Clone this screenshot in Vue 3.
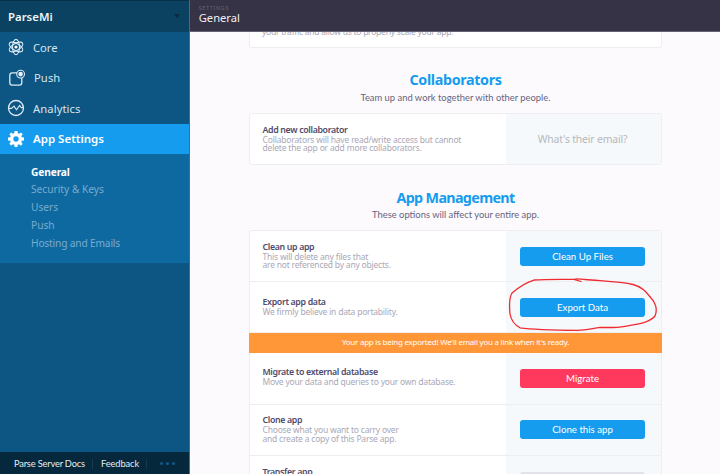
<script setup>
const nav = [
  { icon: 'core', label: 'Core', cls: 'core' },
  { icon: 'push', label: 'Push', cls: 'push' },
  { icon: 'analytics', label: 'Analytics', cls: 'analytics' },
  { icon: 'gear', label: 'App Settings', cls: 'active' },
]
const sub = ['General', 'Security & Keys', 'Users', 'Push', 'Hosting and Emails']
const rowsTop = [
  { title: 'Clean up app', lines: ['This will delete any files that', 'are not referenced by any objects.'], button: 'Clean Up Files', kind: 'blue' },
  { title: 'Export app data', lines: ['We firmly believe in data portability.'], button: 'Export Data', kind: 'blue', circled: true },
]
const rowsBottom = [
  { title: 'Migrate to external database', lines: ['Move your data and queries to your own database.'], button: 'Migrate', kind: 'red' },
  { title: 'Clone app', lines: ['Choose what you want to carry over', 'and create a copy of this Parse app.'], button: 'Clone this app', kind: 'blue' },
  { title: 'Transfer app', lines: [], button: '', kind: 'gray' },
]
</script>

<template>
  <div class="page">
    <aside class="sidebar">
      <div class="app-name"><span>ParseMi</span><svg width="6" height="5" viewBox="0 0 6 5"><path d="M0 0H6L3 4.6Z" fill="#092c40" /></svg></div>
      <nav>
        <div v-for="n in nav" :key="n.label" class="nav-item" :class="n.cls">
          <svg class="icon" width="18" height="18" viewBox="0 0 18 18" fill="none" stroke="#dcebf5" stroke-width="1.1">
            <g v-if="n.icon === 'core'">
              <ellipse cx="9" cy="9" rx="3.5" ry="7.6" />
              <ellipse cx="9" cy="9" rx="3.5" ry="7.6" transform="rotate(60 9 9)" />
              <ellipse cx="9" cy="9" rx="3.5" ry="7.6" transform="rotate(120 9 9)" />
              <circle cx="9" cy="9" r="1.6" fill="#fff" stroke="none" />
            </g>
            <g v-else-if="n.icon === 'push'">
              <path d="M10 3.8H5.2Q2.8 3.8 2.8 6.2V13.8Q2.8 16.2 5.2 16.2H12.4Q14.8 16.2 14.8 13.8V9" stroke-width="1.3" />
              <circle cx="13.6" cy="5.1" r="3.9" />
              <circle cx="13.6" cy="5.1" r="2.3" fill="#e9f4fb" stroke="none" />
            </g>
            <g v-else-if="n.icon === 'analytics'">
              <circle cx="9" cy="9" r="7.5" stroke-width="1.3" />
              <path d="M1.8 9.4H4.6L7 7.2L9.5 10.8L12.6 6.5L14.3 8.6H16.3" />
            </g>
            <g v-else fill="#fff" stroke="none">
              <path fill-rule="evenodd" d="M7.5 1H10.5L10.9 3.3L12.2 3.8L14.1 2.5L15.7 4.2L14.3 6.1L14.8 7.3L17 7.6V10.4L14.8 10.8L14.3 12L15.6 13.9L13.8 15.7L12 14.3L10.8 14.8L10.4 17H7.6L7.2 14.8L6 14.3L4.1 15.6L2.4 13.8L3.7 12L3.2 10.8L1 10.4V7.6L3.2 7.2L3.7 6L2.4 4.2L4.2 2.4L6 3.7L7.2 3.2ZM9 6.3A2.7 2.7 0 1 0 9 11.7A2.7 2.7 0 1 0 9 6.3Z" />
            </g>
          </svg>
          <span>{{ n.label }}</span>
        </div>
      </nav>
      <div class="submenu">
        <div v-for="(s, i) in sub" :key="s" class="sub-item" :class="['s' + i, { current: i === 0 }]"><span>{{ s }}</span></div>
      </div>
      <footer class="foot">
        <span class="docs">Parse Server Docs</span>
        <span class="feedback">Feedback</span>
        <span class="dots"><i></i><i></i><i></i></span>
      </footer>
    </aside>

    <main class="main">
      <header class="topbar">
        <small>SETTINGS</small>
        <span>General</span>
      </header>
      <div class="content">
        <section class="card cut"><p class="line">your traffic and allow us to properly scale your app.</p></section>

        <h2 class="h-collab"><span>Collaborators</span></h2>
        <p class="lead l-collab"><span>Team up and work together with other people.</span></p>
        <section class="card collab">
          <div class="row">
            <div class="text">
              <b class="t-add">Add new collaborator</b>
              <p class="line">Collaborators will have read/write access but cannot</p>
              <p class="line">delete the app or add more collaborators.</p>
            </div>
            <div class="action"><span class="placeholder">What's their email?</span></div>
          </div>
        </section>

        <h2 class="h-manage"><span>App Management</span></h2>
        <p class="lead l-manage"><span>These options will affect your entire app.</span></p>
        <section class="card manage">
          <div v-for="r in rowsTop" :key="r.title" class="row upper">
            <div class="text" :class="'lines-' + r.lines.length"><b>{{ r.title }}</b><p v-for="l in r.lines" :key="l" class="line">{{ l }}</p></div>
            <div class="action">
              <span class="btn" :class="r.kind">{{ r.button }}</span>
              <svg v-if="r.circled" class="circle" width="156" height="56" viewBox="505 276 156 56" fill="none" stroke="#f02a30" stroke-width="1.3" stroke-linecap="round" stroke-linejoin="round">
                <path d="M581 281.5L574 279.3C560 279.4 546 279 534 280C527 282 520 286 512 293C509 298 509 304 510 314C511 320 515 325 520 327.8C531 329.3 546 330 578 330.3C585 330 592 328.5 600 327.4C610 327.7 618 327.6 625 326.3C638 323.7 649 323 655 316C658 309 655 302 651 298C647 293 643 287 633 284.5C620 281.5 600 281 585 279.5C580 279 576 278.5 574 279.3" />
              </svg>
            </div>
          </div>
          <div class="banner"><span>Your app is being exported! We'll email you a link when it's ready.</span></div>
          <div v-for="r in rowsBottom" :key="r.title" class="row">
            <div class="text" :class="'lines-' + r.lines.length"><b>{{ r.title }}</b><p v-for="l in r.lines" :key="l" class="line">{{ l }}</p></div>
            <div class="action"><span class="btn" :class="r.kind">{{ r.button }}</span></div>
          </div>
        </section>
      </div>
    </main>
  </div>
</template>

<style>
body { margin: 0; overflow: hidden; }
</style>

<style scoped>
* { box-sizing: border-box; }
.page { display: flex; width: 720px; height: 474px; overflow: hidden; font-family: "Noto Sans", "Open Sans", sans-serif; background: #fcfafc; }
span, b, p { white-space: nowrap; }
.sidebar { width: 190px; flex: none; display: flex; flex-direction: column; background: #0d5582; border-right: 1px solid #2676a8; }
.app-name { height: 32px; flex: none; background: #0b4262; border-top: 1px solid #073049; display: flex; align-items: center; justify-content: space-between; padding: 0 9px 1px 8px; color: #f0f5f8; font-size: 11.4px; font-weight: 600; }
.nav-item { height: 30.5px; display: flex; align-items: center; padding-left: 7px; color: #d6e5ef; font-size: 11.2px; gap: 8px; }
.nav-item.push { gap: 9px; letter-spacing: .1px; }
.nav-item.analytics { letter-spacing: .1px; }
.nav-item.active { background: #169cee; color: #fff; font-weight: 600; font-size: 11.5px; }
.icon { flex: none; }
.submenu { height: 109px; background: #0e69a1; padding: 9.5px 0 0 31px; }
.sub-item { height: 17.9px; line-height: 17.9px; font-size: 10.2px; color: #78acce; }
.s4 { letter-spacing: -.17px; }
.sub-item.current { color: #fff; font-weight: 700; letter-spacing: -.13px; }
.foot { margin-top: auto; height: 22px; background: #06283d; display: flex; align-items: center; padding: 1px 0 0 14px; font-family: Lato, sans-serif; font-size: 9.3px; color: #e6edf1; }
.docs, .feedback { height: 10px; line-height: 10px; border-right: 1px solid #18384b; }
.docs { width: 79px; margin-right: 8px; letter-spacing: -.18px; }
.feedback { width: 46px; margin-right: 13px; letter-spacing: -.1px; }
.dots { display: flex; gap: 3px; }
.dots i { width: 3px; height: 3px; border-radius: 50%; background: #0d5c8c; }
.main { flex: 1; display: flex; flex-direction: column; }
.topbar { height: 32px; flex: none; background: #363346; border-bottom: 1px solid #65627a; display: flex; flex-direction: column; padding: 5px 0 0 8.7px; color: #f0eff4; font-size: 11.2px; line-height: 14px; }
.topbar small { font-size: 5.3px; line-height: 6px; letter-spacing: .75px; color: #686577; }
.content { width: 413px; margin-left: 59px; height: 442px; overflow: hidden; }
.card { background: #fff; border: 1px solid #eeedf0; border-radius: 3px; overflow: hidden; }
.cut { height: 17px; margin-top: -1px; border-top: 0; border-radius: 0 0 3px 3px; padding: 0 12px; display: flex; align-items: flex-start; }
.cut .line { margin-top: -3.5px; letter-spacing: -.25px; }
h2 { margin: 0; text-align: center; color: #169cee; font-size: 14.3px; line-height: 20px; font-weight: 700; letter-spacing: -.65px; }
.h-collab { margin-top: 22px; letter-spacing: -.35px; }
.lead { margin: 0; text-align: center; font-family: Lato, sans-serif; font-size: 9.4px; line-height: 14px; color: #68647e; }
.l-collab { margin-top: 1px; margin-bottom: 8px; }
.collab { height: 52px; }
.row { display: flex; height: 51.5px; border-bottom: 1px solid #eeedf0; }
.row.upper { height: 51px; }
.collab .row { height: 50px; border: 0; }
.text { width: 255.5px; flex: none; padding: 0 0 2px 12.5px; display: flex; flex-direction: column; justify-content: center; }
.lines-1 { padding-bottom: 5px; }
.upper .lines-1 { padding-bottom: 1px; }
.lines-0 { justify-content: flex-start; padding-top: 9.5px; }
.text b { font-size: 8.8px; line-height: 12px; font-weight: 600; color: #4f4b6c; letter-spacing: -.34px; }
.line { margin: 0; font-size: 8.5px; line-height: 8.4px; color: #aaa8b6; letter-spacing: -.18px; }
.manage .line { letter-spacing: -.21px; }
.action { flex: 1; background: #f5f9fb; position: relative; display: flex; align-items: center; padding-left: 14.3px; }
.placeholder { font-size: 10.4px; color: #b6b8bb; padding-left: 18px; letter-spacing: -.16px; }
.btn { width: 125.5px; height: 19px; border-radius: 3px; text-align: center; line-height: 19px; color: #fff; font-family: Lato, sans-serif; font-size: 9.7px; }
.blue { background: #169cee; }
.red { background: #ff395e; }
.gray { background: #e1e1e9; }
.circle { position: absolute; left: -1px; top: -6px; overflow: visible; z-index: 2; }
.h-manage { margin-top: 23px; }
.l-manage { margin-bottom: 8px; }
.manage { height: 280px; overflow: visible; }
.banner { height: 20px; margin: 0 -1px; text-align: center; line-height: 18px; font-size: 7.9px; letter-spacing: -.2px; background: #ff9739; color: #fff; position: relative; z-index: 1; }
</style>
